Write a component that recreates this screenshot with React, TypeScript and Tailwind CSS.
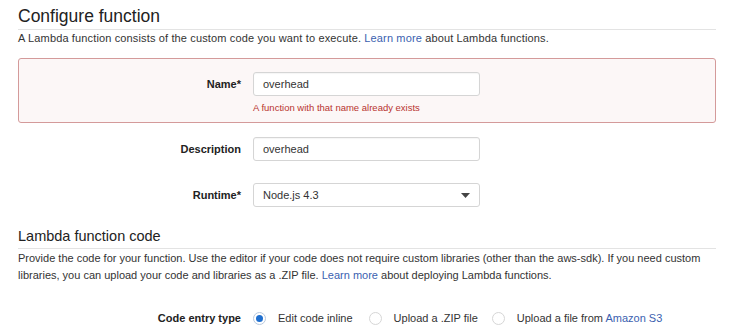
import { ChangeEvent } from "react";

const font = { fontFamily: '"Liberation Sans", Arial, sans-serif' };

function Radio({ checked }: { checked?: boolean }) {
  return (
    <span
      className={
        "w-[13px] h-[13px] rounded-full border flex items-center justify-center shrink-0 " +
        (checked ? "border-[#b9c9dd] bg-white" : "border-[#d6d6d6] bg-white")
      }>
      {checked && <span className="w-[7px] h-[7px] rounded-full bg-[#1f6fcf]" />}
    </span>
  );
}

function Field({ label, children }: { label: string; children: React.ReactNode }) {
  return (
    <div className="flex items-center">
      <div className="w-[223px] text-right text-[11px] font-bold text-[#222]">{label}</div>
      <div className="ml-3">{children}</div>
    </div>
  );
}

function TextBox({ value }: { value: string }) {
  return (
    <input
      readOnly
      value={value}
      onChange={(_e: ChangeEvent<HTMLInputElement>) => {}}
      className="block w-[227px] h-[24px] border border-[#d5d5d5] rounded-[3px] bg-white px-[9px] text-[11px] text-[#333] outline-none shadow-[inset_0_1px_1px_rgba(0,0,0,0.04)]"
      style={font}
    />
  );
}

export default function App() {
  return (
    <div className="w-[740px] h-[336px] bg-white text-[#333] pl-[18px] pr-[24px] overflow-hidden" style={font}>
      <h1 className="pt-[5px] pb-[2px] text-[17.5px] leading-[22px] text-[#222] border-b border-[#e3e3e3]">
        Configure function
      </h1>
      <p className="text-[11px] leading-[16px] tracking-[0.14px] text-[#333]">
        A Lambda function consists of the custom code you want to execute.{" "}
        <a className="text-[#3b5fb0]">Learn more</a> about Lambda functions.
      </p>

      <div className="mt-[12px] border border-[#d49a9a] rounded-[3px] bg-[#fcf7f7] pt-[13px] pb-[7px]">
        <div className="flex items-center">
          <div className="w-[222px] text-right text-[11px] font-bold text-[#222]">Name*</div>
          <div className="ml-3">
            <TextBox value="overhead" />
          </div>
        </div>
        <div className="ml-[234px] mt-[5px] text-[9.5px] leading-[14px] text-[#b8342f]">
          A function with that name already exists
        </div>
      </div>

      <div className="mt-[14px] flex flex-col gap-[22px]">
        <Field label="Description">
          <TextBox value="overhead" />
        </Field>
        <Field label="Runtime*">
          <div className="w-[227px] h-[24px] border border-[#d5d5d5] rounded-[3px] bg-white pl-[9px] pr-[9px] flex items-center justify-between text-[11px] text-[#333]">
            <span>Node.js 4.3</span>
            <svg width="9" height="5" viewBox="0 0 9 5">
              <path d="M0 0h9L4.5 5z" fill="#444" />
            </svg>
          </div>
        </Field>
      </div>

      <h2 className="mt-[20px] pb-[3px] text-[14.5px] leading-[18px] text-[#222] border-b border-[#e3e3e3]">
        Lambda function code
      </h2>
      <div className="mt-[1px] text-[11px] leading-[17px] text-[#333]">
        <div>
          Provide the code for your function. Use the editor if your code does not require custom libraries (other
          than the aws-sdk). If you need custom
        </div>
        <div>
          <span>libraries, you can upload your code and libraries as a .ZIP file. </span>
          <a className="text-[#3b5fb0]">Learn more</a>
          <span> about deploying Lambda functions.</span>
        </div>
      </div>

      <div className="mt-[27px] flex items-center text-[11px] leading-[14px]">
        <div className="w-[223px] text-right font-bold text-[#222]">Code entry type</div>
        <div className="ml-3 flex items-center text-[#333]">
          <Radio checked />
          <span className="ml-[12px]">Edit code inline</span>
          <span className="ml-[16px]">
            <Radio />
          </span>
          <span className="ml-[12px]">Upload a .ZIP file</span>
          <span className="ml-[14px]">
            <Radio />
          </span>
          <span className="ml-[12px]">
            Upload a file from <a className="text-[#3b5fb0]">Amazon S3</a>
          </span>
        </div>
      </div>
    </div>
  );
}
